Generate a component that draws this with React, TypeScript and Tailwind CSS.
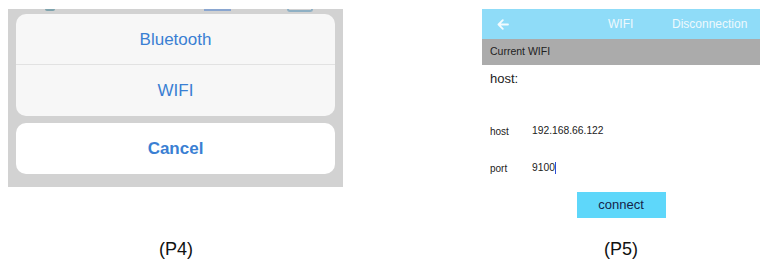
import React from "react";

const blue = "text-[#3a7fd3]";

const ActionSheet: React.FC = () => {
    return <div className="w-[335px] h-[178px] bg-[#d2d2d2] px-2 flex flex-col">
        {/* bits of the page behind the sheet, cut off at the top */}
        <div className="h-[5px] flex flex-row items-start">
            <div className="ml-[29px] w-[10px] h-[2px] bg-[#7fa3ad] rounded-b" />
            <div className="ml-[149px] w-[27px] h-[2px] bg-[#8aa6d0]" />
            <div className="ml-[56px] w-[26px] h-[3px] border-2 border-t-0 border-[#8fb0c4] rounded-b" />
        </div>
        <div className="h-[102px] rounded-[10px] bg-[#f7f7f7] flex flex-col">
            <div className={`h-[50px] pt-[2px] flex items-center justify-center text-[17px] ${blue}`}>Bluetooth</div>
            <div className="h-px bg-[#e2e2e2]" />
            <div className={`h-[51px] flex items-center justify-center text-[17px] ${blue}`}>WIFI</div>
        </div>
        <div className={`mt-[7px] h-[51px] rounded-[10px] bg-white flex items-center justify-center text-[17px] font-bold ${blue}`}>Cancel</div>
    </div>
}

const WifiScreen: React.FC = () => {
    return <div className="w-[278px] flex flex-col bg-white">
        <div className="h-[30px] bg-[#8fdcf8] flex flex-row items-center text-[12px] text-[#eef9fd]">
            <div className="w-[126px] pl-[15px] flex items-center">
                <svg width="12" height="11" viewBox="0 0 12 11" fill="none" stroke="#f2fbfe" strokeWidth="1.8" strokeLinecap="round" strokeLinejoin="round">
                    <path d="M11 5.5H1.5M5.8 1.2L1.5 5.5l4.3 4.3" />
                </svg>
            </div>
            <div className="w-[64px]">WIFI</div>
            <div>Disconnection</div>
        </div>
        <div className="h-[26px] bg-[#ababab] flex items-center pl-2 text-[10.5px] text-[#222]">Current WIFI</div>
        <div className="h-[28px] flex items-center pl-2 text-[13px] text-[#222]">host:</div>
        <div className="h-[28px]" />
        <div className="h-[20px] flex flex-row items-center pl-2 text-[10px] text-[#222]">
            <div className="w-[42px]">host</div>
            <div className="text-[10.3px]">192.168.66.122</div>
        </div>
        <div className="h-[17px]" />
        <div className="h-[20px] flex flex-row items-center pl-2 text-[10px] text-[#222]">
            <div className="w-[42px]">port</div>
            <div className="text-[10.3px] flex items-center">9100<span className="w-px h-[12px] bg-[#2d4fd6]" /></div>
        </div>
        <div className="h-[14px]" />
        <div className="flex justify-center">
            <div className="w-[89px] h-[26px] bg-[#5ed7fa] flex items-center justify-center text-[13px] text-[#15254a]">connect</div>
        </div>
    </div>
}

const App: React.FC<{}> = () => {
    return <div className="w-[766px] h-[265px] bg-white font-['Liberation_Sans',Arial,sans-serif] flex flex-col">
        <div className="pt-[9px] flex flex-row items-start">
            <div className="ml-2"><ActionSheet /></div>
            <div className="ml-[139px]"><WifiScreen /></div>
        </div>
        <div className="mt-auto mb-[2px] flex flex-row text-[18px] text-[#111]">
            <div className="w-[351px] text-center pl-[1px]">(P4)</div>
            <div className="ml-[131px] w-[278px] text-center">(P5)</div>
        </div>
    </div>
}

export default App;
